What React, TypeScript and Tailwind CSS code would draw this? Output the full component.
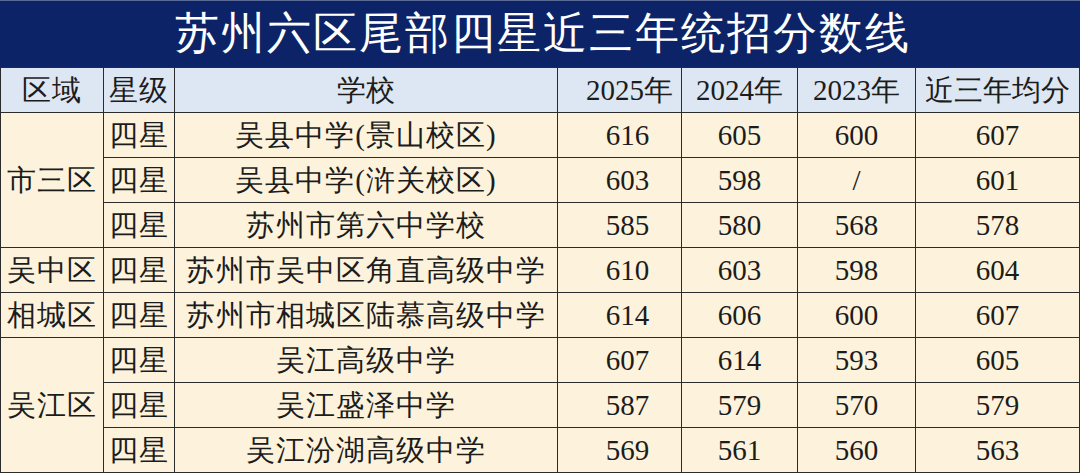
const rows = [
  { region: '市三区', span: 3, star: '四星', school: '吴县中学(景山校区)', y25: '616', y24: '605', y23: '600', avg: '607' },
  { star: '四星', school: '吴县中学(浒关校区)', y25: '603', y24: '598', y23: '/', avg: '601' },
  { star: '四星', school: '苏州市第六中学校', y25: '585', y24: '580', y23: '568', avg: '578' },
  { region: '吴中区', span: 1, star: '四星', school: '苏州市吴中区角直高级中学', y25: '610', y24: '603', y23: '598', avg: '604' },
  { region: '相城区', span: 1, star: '四星', school: '苏州市相城区陆慕高级中学', y25: '614', y24: '606', y23: '600', avg: '607' },
  { region: '吴江区', span: 3, star: '四星', school: '吴江高级中学', y25: '607', y24: '614', y23: '593', avg: '605' },
  { star: '四星', school: '吴江盛泽中学', y25: '587', y24: '579', y23: '570', avg: '579' },
  { star: '四星', school: '吴江汾湖高级中学', y25: '569', y24: '561', y23: '560', avg: '563' },
];

const cell = 'border-[1.5px] border-[#2b2b2b] text-center p-0 whitespace-nowrap';

export default function App() {
  return (
    <div className="w-[1080px] h-[473px] overflow-hidden bg-[#fdf3dc] text-[#1c1c1c] font-['Liberation_Serif',serif]">
      <div className="h-[67px] bg-[#0c2467] flex items-center justify-center border-t border-[#5b6a94]">
        <h1 className="text-white text-[44px] leading-none tracking-[2px] pl-[6px]">苏州六区尾部四星近三年统招分数线</h1>
      </div>
      <table className="table-fixed border-collapse w-[1079px] text-[29px] leading-none font-['Liberation_Serif',serif]">
        <colgroup>
          <col className="w-[103px]" />
          <col className="w-[71px]" />
          <col className="w-[383px]" />
          <col className="w-[124px]" />
          <col className="w-[116px]" />
          <col className="w-[118px]" />
          <col className="w-[164px]" />
        </colgroup>
        <thead>
          <tr className="h-[45px] bg-[#dce7f3]">
            <th className={`${cell} font-normal tracking-[1px]`}>区域</th>
            <th className={`${cell} font-normal tracking-[1px]`}>星级</th>
            <th className={`${cell} font-normal`}>学校</th>
            <th className={`${cell} font-normal text-right pr-[8px]`}>2025年</th>
            <th className={`${cell} font-normal`}>2024年</th>
            <th className={`${cell} font-normal`}>2023年</th>
            <th className={`${cell} font-normal`}>近三年均分</th>
          </tr>
        </thead>
        <tbody>
          {rows.map((r, i) => (
            <tr key={i} className="h-[45px]">
              {r.region && (
                <td rowSpan={r.span} className={`${cell} tracking-[1px]`}>
                  {r.region}
                </td>
              )}
              <td className={`${cell} tracking-[1px]`}>{r.star}</td>
              <td className={`${cell} tracking-[1px]`}>{r.school}</td>
              <td className={`${cell} pl-[16px]`}>{r.y25}</td>
              <td className={cell}>{r.y24}</td>
              <td className={cell}>{r.y23}</td>
              <td className={cell}>{r.avg}</td>
            </tr>
          ))}
        </tbody>
      </table>
    </div>
  );
}
